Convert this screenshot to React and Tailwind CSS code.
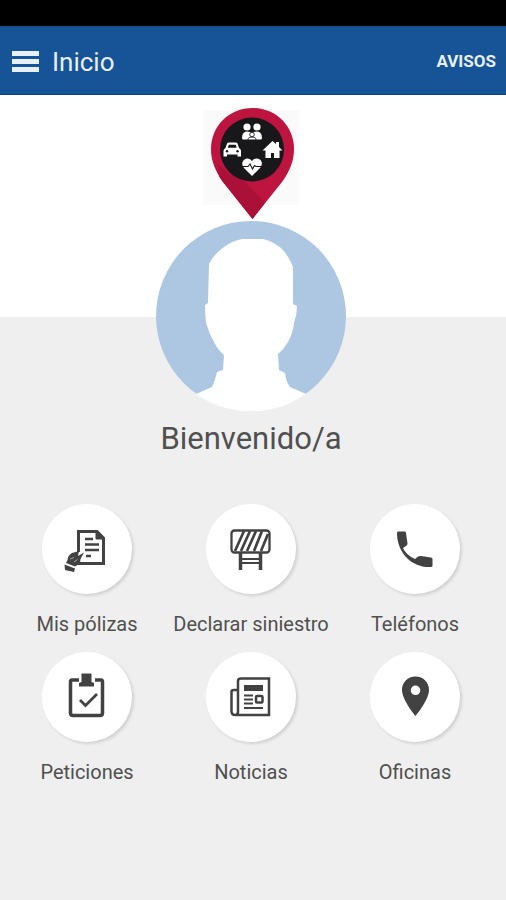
import React from "react";

function Glyph({ children }) {
  return (
    <svg viewBox="0 0 90 90" className="size-full" fill="none" stroke="#424242" strokeWidth="3" aria-hidden="true">
      {children}
    </svg>
  );
}

const PolicyIcon = () => (
  <Glyph>
    <path d="M36.500 48V27.500H55L61.500 34V59.500H34" />
    <path d="M54 27V35H62Z" fill="#424242" strokeWidth="1" />
    <path d="M43 35H51M43 40.500H57M43 46H57M44 52H49" strokeWidth="2.500" />
    <path d="M42 48.500L36 52L37 47L30 49Q26 51 25.500 56L24 59L33 62.500L38 59.500L38.500 55Z" fill="#424242" stroke="none" />
    <path d="M22.500 60.500L33 64.500L32 68L23 66Z" fill="#424242" stroke="none" />
    <path d="M28 55L32 53.500M32 58L35.500 55.500" stroke="#bbb" strokeWidth="0.800" />
  </Glyph>
);

const BarrierIcon = () => (
  <Glyph>
    <rect x="25.500" y="26.500" width="38" height="22" rx="3" strokeWidth="2.300" />
    <path d="M29 47L38 27M35 47L44 27M41 47L50 27M48 47L56 27M55 47L62 30" strokeWidth="2.700" />
    <path d="M34.500 48V66M54.500 48V66" strokeWidth="3.500" />
    <path d="M34 55H55M34 59H55" strokeWidth="2" />
  </Glyph>
);

const PhoneIcon = () => (
  <Glyph>
    <path
      d="M28 27.500H35Q36 27.500 36 29L37.500 39.500Q37.500 41 36 42L33 44Q36 51 45 55L48 52.500Q49 52 51 52L61 53.500Q62.500 54 62.500 55V61.500Q62.500 63 61 63C42 64 27 49 27 29Q27 27.500 28 27.500Z"
      fill="#424242"
      stroke="none"
    />
  </Glyph>
);

const ClipboardIcon = () => (
  <Glyph>
    <path d="M37 28H30Q28.500 28 28.500 30V61Q28.500 63.500 31 63.500H58Q60.500 63.500 60.500 61V30Q60.500 28 59 28H53" strokeWidth="3.500" />
    <path d="M39.500 21.500H49.500V30L52 31V34.500H37V31L39.500 30Z" fill="#424242" stroke="none" />
    <path d="M38 48L43.500 53.500L55 42" strokeWidth="2.800" />
  </Glyph>
);

const NewsIcon = () => (
  <Glyph>
    <path d="M32 60V29Q32 26.500 35 26.500H63V63H29Q25.500 63 25.500 59V40Q25.500 38 27.500 38H32V60Q32 63 29 63" strokeWidth="2.500" />
    <rect x="38" y="33" width="19" height="6" fill="#424242" stroke="none" />
    <path d="M38 43.500H47M38 47.500H47M38 51.500H47M38 56H57" strokeWidth="2" />
    <rect x="50" y="44" width="6.500" height="6.500" rx="1" strokeWidth="2.500" />
  </Glyph>
);

const OfficeIcon = () => (
  <Glyph>
    <path
      d="M45.500 24.500C37.500 24.500 32 30.500 32 38C32 48 45.500 64 45.500 64S59 48 59 38C59 30.500 53.500 24.500 45.500 24.500ZM45.500 33.500A4.800 4.800 0 1 1 45.500 43.100A4.800 4.800 0 1 1 45.500 33.500Z"
      fill="#424242"
      fillRule="evenodd"
      stroke="none"
    />
  </Glyph>
);

const MENU = [
  { label: "Mis pólizas", Icon: PolicyIcon },
  { label: "Declarar siniestro", Icon: BarrierIcon },
  { label: "Teléfonos", Icon: PhoneIcon },
  { label: "Peticiones", Icon: ClipboardIcon },
  { label: "Noticias", Icon: NewsIcon },
  { label: "Oficinas", Icon: OfficeIcon },
];

function BrandPin() {
  return (
    <svg viewBox="0 0 96 111" className="h-[111px] w-24" role="img" aria-label="Seguros">
      <rect x="0" y="2" width="96" height="95" fill="#fafafa" />
      <path d="M49.500 0C26 0 8 18 8 41C8 54 13 64 20 74L49.500 111L79 74C86 64 91 54 91 41C91 18 73 0 49.500 0Z" fill="#bd1440" />
      <path d="M16 68Q17.500 71 20 74L49.500 111L62 95L38 70Q26 68 15 56Z" fill="#ab1039" />
      <circle cx="49" cy="41.500" r="32" fill="#18181a" />
      <g fill="#fff">
        <circle cx="44" cy="19" r="3.600" />
        <circle cx="54" cy="19" r="3.600" />
        <path d="M39 30Q39 23.500 44 23.500Q47 23.500 49 25Q51 23.500 54 23.500Q59 23.500 59 30Q59 31.500 57.500 31.500H40.500Q39 31.500 39 30Z" />
      </g>
      <circle cx="49" cy="26.500" r="2.300" fill="#fff" stroke="#18181a" strokeWidth="0.900" />
      <path d="M45 32V31Q45 29 49 29T53 31V32" fill="none" stroke="#18181a" strokeWidth="0.800" />

      <path
        d="M24 35.500Q24.500 34.500 26 34.500H32.500Q34 34.500 34.500 35.500L36 40Q38 41 38 43V48.500H34.500V46.500H24V48.500H20.500V43Q20.500 41 22.500 40Z"
        fill="#fff"
      />
      <path d="M24.800 39.800L25.800 36.800H32.700L33.700 39.800Z" fill="#18181a" />
      <circle cx="24" cy="43.300" r="1.200" fill="#18181a" />
      <circle cx="34.500" cy="43.300" r="1.200" fill="#18181a" />

      <path d="M59.500 42.500L69.500 33L73 36V34H76V39L79.500 42.500H76.500V50H71V45H68V50H62.500V42.500Z" fill="#fff" />

      <path d="M49 68L41 60Q38.500 57 39.500 54Q41 50.500 44.500 50.500Q47.500 50.500 49 53Q50.500 50.500 53.500 50.500Q57.500 50.500 58.700 54Q59.500 57 57 60Z" fill="#fff" />
      <path d="M39 58.500H45L47 56L49.500 61L51.500 57.500L53 58.500H59" fill="none" stroke="#18181a" strokeWidth="1.100" />
    </svg>
  );
}

function Avatar() {
  return (
    <svg viewBox="0 0 190 190" className="size-[190px]" role="img" aria-label="Foto de perfil">
      <circle cx="95" cy="95" r="95" fill="#adc7e3" />
      <path
        d="M86 18H107Q116 20 125 27Q133 35 137 46V83L141 85Q141 94 138 102Q137 112 132 121Q128 128 122 133L123 149L129 152Q130 161 134 166L150 173A95 95 0 0 1 40 173L56 166Q59 160 61 151L67 149L68 134Q62 129 58 121Q53 112 50 102Q49 93 49 84L52 82L53 43Q58 33 68 26Q76 20 86 18Z"
        fill="#fff"
      />
    </svg>
  );
}

export default function App() {
  return (
    <div className="flex min-h-screen flex-col bg-[#efefef] font-[Roboto,sans-serif] text-[#505050]">
      <div className="h-[26px] bg-black" />
      <header className="flex h-[69px] items-center justify-between border-y border-t-[#1a4a85] border-b-[#0f4285] bg-[#165397] pt-[2px] pr-[10px] pl-3 text-[#e8effa]">
        <div className="flex items-center gap-[13px]">
          <button type="button" aria-label="Menú" className="flex w-[27px] flex-col gap-[3px]">
            <span className="h-[5px] bg-current" />
            <span className="h-[5px] bg-current" />
            <span className="h-[5px] bg-current" />
          </button>
          <h1 className="text-[26px] leading-8">Inicio</h1>
        </div>
        <button type="button" className="text-[17px] font-bold">AVISOS</button>
      </header>

      <section className="flex flex-col items-center gap-[2px] bg-white pt-[13px] pr-1">
        <BrandPin />
        <div className="relative -mb-[94px]">
          <Avatar />
        </div>
      </section>

      <main className="pt-[102px]">
        <h2 className="pr-1 text-center text-[31px] leading-10">Bienvenido/a</h2>
        <nav className="mt-[45px] grid grid-cols-3 gap-y-[14px] pr-[9px] pl-[5px]">
          {MENU.map(({ label, Icon }) => (
            <button key={label} type="button" className="flex flex-col items-center gap-4">
              <span className="size-[90px] rounded-full bg-white shadow-[2px_2px_3px_rgba(0,0,0,0.12)]">
                <Icon />
              </span>
              <span className="text-xl leading-7 whitespace-nowrap">{label}</span>
            </button>
          ))}
        </nav>
      </main>
    </div>
  );
}
